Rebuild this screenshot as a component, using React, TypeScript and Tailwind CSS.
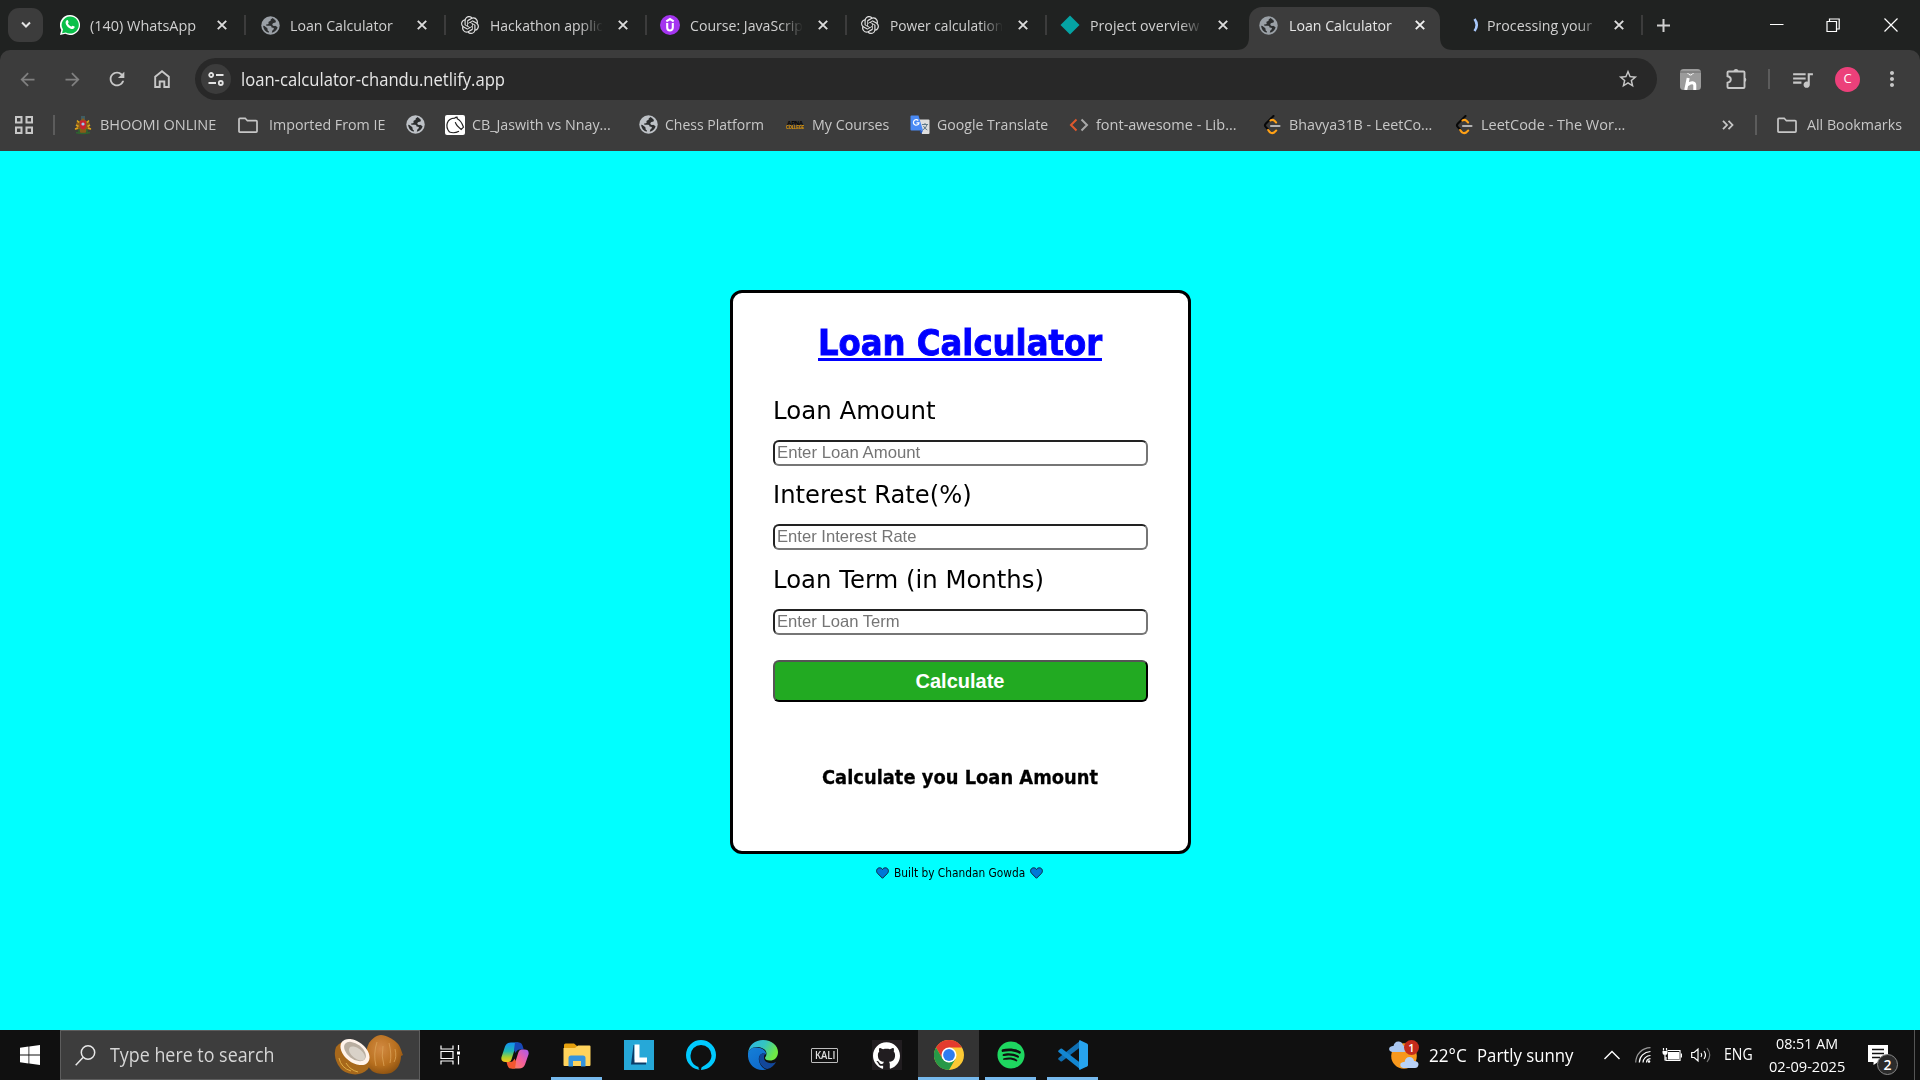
import { useLayoutEffect, useRef, useState } from "react";
import type { ReactNode } from "react";
import { FaSpotify } from "react-icons/fa";
import { MdArrowBack, MdArrowForward, MdRefresh, MdStarBorder, MdQueueMusic, MdMoreVert } from "react-icons/md";
import { SiOpenai, SiGithub } from "react-icons/si";

/* Text condensed or widened to fill the width given by its class. */
function Fit({ children, className }: { children: string; className: string }) {
  const outer = useRef<HTMLSpanElement>(null);
  const inner = useRef<HTMLSpanElement>(null);
  const [scale, setScale] = useState(1);
  useLayoutEffect(() => {
    const fit = () => {
      if (outer.current && inner.current) setScale(outer.current.clientWidth / inner.current.offsetWidth);
    };
    fit();
    document.fonts.ready.then(fit);
  }, []);
  return (
    <span ref={outer} className={`block shrink-0 whitespace-nowrap ${className}`}>
      <span ref={inner} className="inline-block origin-left" style={{ transform: `scaleX(${scale})` }}>
        {children}
      </span>
    </span>
  );
}

const Globe = ({ light }: { light?: boolean }) => (
  <svg viewBox="0 0 20 20" className={light ? "size-[19px] shrink-0 text-[#bdc1c6]" : "size-[19px] shrink-0 text-[#9aa0a6]"}>
    <circle cx="10" cy="10" r="9.700" fill="currentColor" />
    <path d="M12.300 2.200l-1.800 1.300q-.8.600-.3 1.600l-1.700.6q-1 .4-.6 1.500.5 1.100-.6 1.500l-1.900.2q-.3 1.200.8 1.300l3.600.1q1.300.2 1.300 1.700l1.700.3q1.300.4.6 1.700l-1.600 1.400-.4 2.200q4.800-1.300 6.100-5.600l-1.500-1.200q-.9-.8-1.900-.4-1.900.3-2.200-1.100-.1-1.500 1.200-1.900l2.200-.5q.9-1.600-.2-2.500z" fill="#2c2e2f" />
    <path d="M2.200 10.300q.4 5.600 5.900 7.300l.2-1.500q-1.500-.3-1.400-2l-.2-1.200-3-2.300z" fill="#2c2e2f" />
  </svg>
);

const Close = ({ className }: { className: string }) => (
  <svg viewBox="0 0 10 10" className={`size-[10px] shrink-0 ${className}`}>
    <path d="M0.8 0.8l8.4 8.4M9.2 0.8L0.8 9.2" stroke="currentColor" strokeWidth="1.9" />
  </svg>
);

const Udemy = () => (
  <svg viewBox="0 0 20 20" className="size-5">
    <circle cx="10" cy="10" r="10" fill="#a435f0" />
    <path d="M6.3 6.3L10 4l3.7 2.3M7.2 8v4.6c0 3.9 5.6 3.9 5.6 0V8" fill="none" stroke="#fff" strokeWidth="2.1" />
  </svg>
);

const Diamond = () => (
  <svg viewBox="0 0 20 20" className="size-5"><path d="M10 .5L19.5 10 10 19.5.5 10z" fill="#05a3a3" /></svg>
);

const Spinner = () => (
  <svg viewBox="0 0 20 20" className="size-5"><path d="M14.5 4q4.500 6 0 12" fill="none" stroke="#a8c7fa" strokeWidth="2.600" /></svg>
);

const WhatsApp = () => (
  <svg viewBox="0 0 20 20" className="size-5">
    <path d="M10 0a10 10 0 1 1-4.7 18.8L0 20l1.3-5A10 10 0 0 1 10 0z" fill="#fff" />
    <path d="M10 1.4a8.6 8.6 0 1 1-4.2 16L2 18.2l1-3.6A8.6 8.6 0 0 1 10 1.4z" fill="#0ac04a" />
    <path d="M6.7 5.3c.7-.5 1.1-.2 1.4.5l.5 1.2c.2.6-.8 1.2-.6 1.6.7 1.4 1.8 2.4 3.2 3 .5.2 1-1.2 1.6-.9l1.7.9c.6.4-.2 2.3-1.7 2.5-3.3.2-7.4-3.8-7.2-6.7 0-.8.4-1.5 1.1-2.1z" fill="#fff" />
  </svg>
);

function Tab({ icon, title, w, fade, last }: { icon: ReactNode; title: string; w: string; fade?: boolean; last?: boolean }) {
  return (
    <div className={`flex h-full items-center ${last ? "w-[190px]" : "w-[200px]"}`}>
      <div className="ml-[14px] flex size-5 shrink-0 items-center justify-center">{icon}</div>
      <div className={fade ? "ml-[10px] w-[113px] [mask-image:linear-gradient(to_right,black_80%,transparent)]" : "ml-[10px] w-[113px]"}>
        <Fit className={w}>{title}</Fit>
      </div>
      <Close className="ml-[15px] text-[#dcdcdc]" />
      {!last && <div className="ml-[17px] h-5 w-[2px] shrink-0 bg-[#3c3c3c]" />}
    </div>
  );
}

const Folder = () => (
  <svg viewBox="0 0 20 20" className="size-5" fill="none" stroke="#c7c7c7" strokeWidth="1.7">
    <path d="M1 16.2V4.2q0-.9.9-.9h5.3l2.2 2.4h8.7q.9 0 .9.9v9.600q0 .9-.9.9H1.900q-.9 0-.9-.9z" />
  </svg>
);

const Crest = () => (
  <svg viewBox="0 0 20 20" className="size-5">
    <path d="M8 1h4v4H8z" fill="#3f5d63" />
    <path d="M10 3l3 3h2.500l1.500 3-1.500 2 3 4-4-.500-2 3.500H7.500l-2-3.500-4 .500 3-4L3 9l1.500-3H7z" fill="#8a5a18" />
    <path d="M4 5.500l2 2M16 5.500l-2 2M3 10l2.500 1.500M17 10l-2.500 1.500M2 14l3-1M18 14l-3-1" stroke="#d9a51f" strokeWidth="1.600" />
    <path d="M7 5.500h6v5q0 3-3 4-3-1-3-4z" fill="#c8222f" />
    <circle cx="10" cy="9" r="1.6" fill="#9dc5ef" />
    <path d="M3 17.500q7 2 14 0M6 14v4M14 14v4" stroke="#2f6430" strokeWidth="1.6" fill="none" />
  </svg>
);

const Knight = () => (
  <svg viewBox="0 0 20 20" className="size-5">
    <rect width="20" height="20" rx="2" fill="#fff" />
    <path d="M4.500 17C-.5 11 2 3.500 9.500 3.200c1.200-1 2-1 2.500-1l.3 1.600c3.700 1.700 5 5 6.200 8.400l-2.300 2.200C13.600 12.500 11 10.500 10.300 7.200M4.500 17c3 1.200 6.500.8 9.500-.8" fill="none" stroke="#222" strokeWidth="1.2" />
  </svg>
);

const Courses = () => (
  <span className="flex w-5 flex-col items-center font-['Liberation_Sans'] text-[6px] font-black leading-[4px] tracking-tighter">
    <span className="text-black">APNA</span>
    <Fit className="w-[18px] text-[5px] text-[#e59a08]">COLLEGE</Fit>
  </span>
);

const Translate = () => (
  <svg viewBox="0 0 20 20" className="size-5">
    <path d="M8 4.5h10.500q1 0 1 1V18q0 1-1 1H12z" fill="#dedede" />
    <path d="M12 9.500h6M15 8v1.500M17 9.700q-1 4-4.500 5.300M13.500 11q1 2.500 3.800 4" stroke="#607988" fill="none" />
    <path d="M1.500.5h7L13 15.500H1.500q-1 0-1-1v-13q0-1 1-1z" fill="#4a8af4" />
    <path d="M9.500 15.500H13l-1.800 3.500z" fill="#2459c4" />
    <path d="M8.300 5.500a2.800 2.800 0 1 0 .7 2.300H6.500" fill="none" stroke="#fff" strokeWidth="1.2" />
  </svg>
);

const Code = () => (
  <svg viewBox="0 0 20 20" className="size-5" fill="none" strokeWidth="2">
    <path d="M7.500 4.500L2 10l5.500 5.500" stroke="#e0592d" />
    <path d="M12.500 4.500L18 10l-5.500 5.500" stroke="#a9a9a9" />
  </svg>
);

const Leet = () => (
  <svg viewBox="0 0 20 20" className="size-5" fill="none" strokeWidth="2.1" strokeLinecap="round">
    <path d="M11.500 1L3.700 8.700q-1.500 1.500 0 3.200l2.500 2.700" stroke="#080808" />
    <path d="M8.500 5.500q2-1.500 4 .3l1.600 1.600M6.200 15q2.500 4.500 6 2.500l2-2" stroke="#ffa116" />
    <path d="M9 11h8.500" stroke="#b3b3b3" />
  </svg>
);

const bookmarks: { icon: ReactNode; label?: string; w?: string; ml: string; gap?: string }[] = [
  { icon: <Crest />, label: "BHOOMI ONLINE", w: "w-[116px]", ml: "ml-[18px]" },
  { icon: <Folder />, label: "Imported From IE", w: "w-[116px]", ml: "ml-[22px]", gap: "ml-[11px]" },
  { icon: <Globe light />, ml: "ml-[20px]" },
  { icon: <Knight />, label: "CB_Jaswith vs Nnay...", w: "w-[139px]", ml: "ml-[20px]" },
  { icon: <Globe light />, label: "Chess Platform", w: "w-[99px]", ml: "ml-[27px]" },
  { icon: <Courses />, label: "My Courses", w: "w-[77px]", ml: "ml-[21px]" },
  { icon: <Translate />, label: "Google Translate", w: "w-[111px]", ml: "ml-[21px]" },
  { icon: <Code />, label: "font-awesome - Lib...", w: "w-[141px]", ml: "ml-[21px]" },
  { icon: <Leet />, label: "Bhavya31B - LeetCo...", w: "w-[143px]", ml: "ml-[25px]" },
  { icon: <Leet />, label: "LeetCode - The Wor...", w: "w-[144px]", ml: "ml-[22px]" },
];

function TabStrip() {
  return (
    <header className="flex h-[50px] items-center bg-[#202221] text-[15px] text-[#d0d0d0]">
      <button className="ml-2 flex h-[34px] w-[35px] items-center justify-center rounded-[11px] bg-[#3c3c3c]">
        <svg viewBox="0 0 10 8" className="h-2 w-[10px]"><path d="M1 1.500l4 4 4-4" fill="none" stroke="#e3e3e3" strokeWidth="2" /></svg>
      </button>
      <div className="ml-[3px] flex h-full items-center">
        <Tab icon={<WhatsApp />} title="(140) WhatsApp" w="w-[106px]" />
        <Tab icon={<Globe />} title="Loan Calculator" w="w-[103px]" />
        <Tab icon={<SiOpenai className="size-[18px] text-[#e0e0e0]" />} title="Hackathon applic" w="w-[113px]" fade />
        <Tab icon={<Udemy />} title="Course: JavaScrip" w="w-[113px]" fade />
        <Tab icon={<SiOpenai className="size-[18px] text-[#e0e0e0]" />} title="Power calculation" w="w-[113px]" fade />
        <Tab icon={<Diamond />} title="Project overview" w="w-[109px]" fade last />
      </div>
      <div className="flex h-full items-end text-[#3c3c3c]">
        <svg viewBox="0 0 13 13" className="size-[13px]"><path d="M13 0v13H0Q13 13 13 0z" fill="currentColor" /></svg>
        <div className="flex h-[43px] w-[191px] items-center rounded-t-[13px] bg-[#3c3c3c] pb-[7px] text-[#e6e6e6]">
          <div className="ml-[10px] flex size-5 items-center"><Globe /></div>
          <Fit className="ml-[10px] w-[103px]">Loan Calculator</Fit>
          <Close className="ml-[23px] text-[#f0f0f0]" />
        </div>
        <svg viewBox="0 0 13 13" className="size-[13px]"><path d="M0 0v13h13Q0 13 0 0z" fill="currentColor" /></svg>
      </div>
      <div className="ml-[7px] size-5"><Spinner /></div>
      <div className="ml-[7px] w-[113px] [mask-image:linear-gradient(to_right,black_80%,transparent)]">
        <Fit className="w-[105px]">Processing your</Fit>
      </div>
      <Close className="ml-[14px] text-[#dcdcdc]" />
      <div className="ml-[17px] h-5 w-[2px] bg-[#3c3c3c]" />
      <svg viewBox="0 0 13 13" className="ml-[14px] size-[13px]"><path d="M6.500 0v13M0 6.500h13" stroke="#d0d0d0" strokeWidth="2" /></svg>
      <svg viewBox="0 0 14 14" className="ml-auto size-[14px]"><path d="M0 6.500h13.500" stroke="#fff" /></svg>
      <svg viewBox="0 0 14 14" className="ml-[42px] size-[14px]" fill="none" stroke="#fff" strokeWidth="1.200"><path d="M1 3.500h9.500v10H1zM3.500 3V1h9.700v10h-2.500" /></svg>
      <svg viewBox="0 0 14 14" className="ml-[44px] mr-[22px] size-[14px]"><path d="M.5.5l13 13M13.500.5l-13 13" stroke="#fff" strokeWidth="1.200" /></svg>
    </header>
  );
}

function Toolbar() {
  return (
    <div className="bg-[#202221]">
      <div className="flex h-[58px] items-center rounded-t-[10px] bg-[#3c3c3c] text-[#c7c7c7]">
        <MdArrowBack className="ml-[17px] size-[21px] text-[#808080]" />
        <MdArrowForward className="ml-[24px] size-[21px] text-[#808080]" />
        <MdRefresh className="ml-[23px] size-[22px]" />
        <svg viewBox="0 0 16 18" className="ml-[26px] h-[18px] w-4" fill="none" stroke="currentColor" strokeWidth="1.900">
          <path d="M1.200 17V6.800L8 1.300l6.800 5.500V17h-4.500v-5.500H5.700V17z" />
        </svg>
        <div className="ml-[25px] flex h-[42px] w-[1462px] items-center rounded-full bg-[#282828]">
          <div className="ml-[6px] flex size-[30px] items-center justify-center rounded-full bg-[#3c3c3c]">
            <svg viewBox="0 0 16 14" className="h-[14px] w-4" fill="none" stroke="#e3e3e3" strokeWidth="1.800">
              <circle cx="3.200" cy="3" r="2" /><path d="M8 3h7.500M.5 11H8" /><circle cx="12.800" cy="11" r="2" />
            </svg>
          </div>
          <Fit className="ml-[10px] w-[264px] text-[17.5px] text-[#e6e6e6]">loan-calculator-chandu.netlify.app</Fit>
          <MdStarBorder className="ml-auto mr-[18px] size-[22px]" />
        </div>
        <svg viewBox="0 0 21 21" className="ml-[23px] size-[21px] shrink-0">
          <rect width="21" height="21" rx="3.500" fill="#9b9b9b" />
          <path d="M0 3h21" stroke="#6b6b6b" />
          <path d="M7.500 4q3 4 6 0" fill="none" stroke="#fff" />
          <path d="M8.200 9L5.700 21M7.500 16q2-2.500 5-2.300 2.500.5 2.300 3V21" fill="none" stroke="#fff" strokeWidth="3" />
        </svg>
        <svg viewBox="0 0 24 24" className="ml-[24px] size-6 shrink-0" fill="none" stroke="currentColor" strokeWidth="1.900">
          <path d="M3.500 4.500h15q1 0 1 1v14.500q0 1-1 1h-15q-1 0-1-1v-4.300q3.300-.6 3.300-3.200T2.500 9.300V5.500q0-1 1-1z" />
          <path d="M8.500 4.500a2.500 2.500 0 0 1 5 0zM19.500 10.500a2.300 2.300 0 0 1 0 4.500z" fill="currentColor" stroke="none" />
        </svg>
        <div className="ml-[19px] h-5 w-[2px] bg-[#5c5c5c]" />
        <MdQueueMusic className="ml-[20px] size-[25px]" />
        <div className="ml-[20px] flex size-[25px] items-center justify-center rounded-full bg-[#ec407a] text-[13px] text-white">C</div>
        <MdMoreVert className="ml-[20px] size-6" />
      </div>
      <div className="flex h-[43px] items-center bg-[#3c3c3c] pb-[10px] text-[15px] text-[#c7c7c7]">
        <svg viewBox="0 0 18 18" className="ml-[15px] size-[18px]" fill="none" stroke="currentColor" strokeWidth="2">
          <path d="M1 1h5.500v5.500H1zM11.500 1H17v5.500h-5.500zM1 11.500h5.500V17H1zM11.500 11.500H17V17h-5.500z" />
        </svg>
        <div className="ml-[20px] h-5 w-[2px] bg-[#5c5c5c]" />
        {bookmarks.map((b, i) => (
          <div key={i} className={`flex items-center ${b.ml}`}>
            <div className="flex size-5 shrink-0 items-center justify-center">{b.icon}</div>
            {b.label && b.w && <Fit className={`${b.gap ?? "ml-[7px]"} ${b.w}`}>{b.label}</Fit>}
          </div>
        ))}
        <svg viewBox="0 0 12 10" className="ml-auto h-[10px] w-3"><path d="M1 .8L5 5 1 9.200M6.500.8l4 4.200-4 4.200" fill="none" stroke="currentColor" strokeWidth="1.800" /></svg>
        <div className="ml-[21px] h-5 w-[2px] bg-[#5c5c5c]" />
        <div className="ml-[20px]"><Folder /></div>
        <Fit className="ml-[10px] mr-[18px] w-[95px]">All Bookmarks</Fit>
      </div>
    </div>
  );
}

function Field({ label, w, hint, hintW, mt }: { label: string; w: string; hint: string; hintW: string; mt: string }) {
  return (
    <label className={`flex flex-col ${mt}`}>
      <Fit className={`h-8 text-[24px] leading-8 ${w}`}>{label}</Fit>
      <span className="mt-[13px] flex h-[26px] items-center rounded-[6px] border-2 border-b-[#767676] border-l-[#222] border-r-[#767676] border-t-[#222] bg-white pb-[2px] pl-[2px] font-['Liberation_Sans'] text-[16.5px] leading-none text-[#757575]">
        <Fit className={hintW}>{hint}</Fit>
      </span>
    </label>
  );
}

const Heart = () => (
  <svg viewBox="0 0 13 12" className="h-3 w-[13px]">
    <path d="M6.500 11.300L1.500 6.300C-.5 4 1 .8 3.600.8c1.300 0 2.300.6 2.900 1.700C7.100 1.400 8.100.8 9.400.8c2.600 0 4.100 3.200 2.100 5.500z" fill="#0078d7" stroke="#10243c" />
  </svg>
);

function Calculator() {
  return (
    <main className="flex flex-1 flex-col items-center bg-[#00ffff] text-black">
      <section className="mt-[139px] flex h-[564px] w-[461px] flex-col rounded-[12px] border-[3px] border-black bg-white px-10 font-['DejaVu_Sans']">
        <h1 className="mt-[28px] flex justify-center text-[#0000ff]">
          <span className="flex h-[40px] items-start border-b-[3px] border-[#0000ff]">
            <Fit className="w-[284px] text-[35.5px] font-bold leading-[44px] [-webkit-text-stroke:0.9px_#0000ff]">Loan Calculator</Fit>
          </span>
        </h1>
        <Field label="Loan Amount" w="w-[163px]" hint="Enter Loan Amount" hintW="w-[143px]" mt="mt-[34px]" />
        <Field label="Interest Rate(%)" w="w-[199px]" hint="Enter Interest Rate" hintW="w-[140px]" mt="mt-[13px]" />
        <Field label="Loan Term (in Months)" w="w-[271px]" hint="Enter Loan Term" hintW="w-[123px]" mt="mt-[14px]" />
        <button className="mt-[25px] flex h-[42px] items-center justify-center rounded-[6px] border-2 border-b-black border-l-[#555] border-r-black border-t-[#555] bg-[#22aa22] font-['Liberation_Sans'] text-[20px] font-bold text-white">
          <Fit className="w-[89px]">Calculate</Fit>
        </button>
        <div className="mt-[62px] flex justify-center">
          <Fit className="w-[276px] text-[19.5px] font-bold leading-7 [-webkit-text-stroke:0.3px_#000]">Calculate you Loan Amount</Fit>
        </div>
      </section>
      <footer className="mt-[11px] flex items-center gap-[5px] pr-[2px] font-['DejaVu_Sans'] text-[11.5px] leading-4">
        <Heart /><Fit className="w-[131px]">Built by Chandan Gowda</Fit><Heart />
      </footer>
    </main>
  );
}

const Coconuts = () => (
  <svg viewBox="0 0 70 42" className="h-[42px] w-[70px]">
    <defs>
      <radialGradient id="nut" cx="40%" cy="35%" r="70%"><stop stopColor="#d28a42" /><stop offset=".6" stopColor="#b8701f" /><stop offset="1" stopColor="#8a5010" /></radialGradient>
    </defs>
    <path d="M47 1c5 0 12 4 15 7 4 3 5 8 7 13l-2 1c0 8-4 14-10 17-7 2-15 1-19-2-9-8-7-20-3-28 3-4 7-8 12-8z" fill="url(#nut)" />
    <path d="M43 8q-4 12-1 24M49 12q-2 10 1 20M55 9q3 12 1 20M61 15q2 8-1 13" fill="none" stroke="#dba256" strokeWidth=".8" />
    <path d="M2 13c5-7 14-8 23-3 9 7 13 18 9 25-6 7-18 7-26 1C2 30-1 21 2 13z" fill="#a7681b" />
    <path d="M5 24q2 10 12 13M12 29q4 7 12 9" stroke="#dfad45" fill="none" />
    <ellipse cx="21" cy="18" rx="16.500" ry="10.500" transform="rotate(38 21 18)" fill="#fff3ea" />
    <ellipse cx="21" cy="17.500" rx="12.500" ry="7.500" transform="rotate(38 21 17.500)" fill="#b9aea0" />
    <ellipse cx="23" cy="19.500" rx="9.500" ry="5" transform="rotate(38 23 19.500)" fill="#d9d2c8" />
  </svg>
);

const Copilot = () => (
  <svg viewBox="0 0 28 27" className="h-[27px] w-7">
    <defs>
      <linearGradient id="cpA" x1="0" y1="0" x2="0" y2="1"><stop stopColor="#1390f5" /><stop offset=".45" stopColor="#20b8b0" /><stop offset=".75" stopColor="#a6cf2f" /><stop offset="1" stopColor="#fbc51a" /></linearGradient>
      <linearGradient id="cpB" x1="1" y1="0" x2="0" y2="1"><stop stopColor="#a75bf0" /><stop offset=".5" stopColor="#f45f9c" /><stop offset="1" stopColor="#ff8a50" /></linearGradient>
    </defs>
    <path d="M10 .5h8q-2.500.5-3.500 4l-4 13q-.8 2.500-3 2.500H4.500Q-.5 20 .5 15L4 4.500Q5.500.5 10 .5z" fill="url(#cpA)" />
    <path d="M14 .5h4q2.500 0 3.500 3l1.300 4h-4q-3 0-4.300 3.500l-1.500-3z" fill="#1748b8" />
    <path d="M18 26.500h-8q2.500-.5 3.500-4l4-12.500q.8-2.500 3-2.500h3q5 0 4 5l-3.500 10q-1.500 4-6 4z" fill="url(#cpB)" />
    <path d="M14 26.500h-4q-2.500 0-3.500-3l-1-3.500h4q2.500 0 4-3.500l1.500 3z" fill="#f4572f" />
  </svg>
);

const Explorer = () => (
  <svg viewBox="0 0 28 24" className="h-6 w-7">
    <path d="M1 2q0-1.500 1.500-1.500H11L14 3v3H1z" fill="#e5a00d" />
    <path d="M.5 5H12l3-2.500h11.500q1 0 1 1V22q0 1-1 1H1.500q-1 0-1-1z" fill="#ffd35c" />
    <path d="M5.500 23.500V15q0-2.500 2.500-2.500h12q2.500 0 2.500 2.500v8.500H18V18h-8v5.500z" fill="#3494de" />
  </svg>
);

const Letter = () => (
  <svg viewBox="0 0 30 30" className="size-[30px]">
    <path d="M0 0h30v30H0z" fill="#26a8d8" />
    <path d="M10.500 5v14.500L7 24.500 9.500 5zM7 24.500l3.500-5L22 22v2.500z" fill="#0b3c68" />
    <path d="M10.500 4.500h5v13H23v5H10.500z" fill="#fff" />
  </svg>
);

const Alexa = () => (
  <svg viewBox="0 0 30 30" className="size-[30px]">
    <path fillRule="evenodd" d="M15 0a15 15 0 0 1 0 30c-2 0-2.500-.8-2.500-3C7.500 25.500 4.500 21 4.500 15.500a10.500 10.500 0 1 1 21 0c0 6-5.500 9-10 12l-.5 2.500A15 15 0 1 1 15 0z" fill="#00caff" />
  </svg>
);

const Edge = () => (
  <svg viewBox="0 0 30 30" className="size-[30px]">
    <defs>
      <linearGradient id="edA" x1="0" y1="0" x2="1" y2=".4"><stop stopColor="#2bb5e8" /><stop offset=".55" stopColor="#35c5c0" /><stop offset="1" stopColor="#6fe844" /></linearGradient>
      <linearGradient id="edB" x1="0" y1="0" x2=".6" y2="1"><stop stopColor="#1580d8" /><stop offset="1" stopColor="#0f6acb" /></linearGradient>
    </defs>
    <path d="M0 13C1 5 7 0 15 0c9 0 15 6 15 12 0 6-4 8.500-8 8.500-3.500 0-5-1.500-5-2.500s1.500-1.800 1.500-4.500C18.500 9 13 7 9 7c-5 0-8 3-9 6z" fill="url(#edA)" />
    <path d="M0 13c1-4 5-6 9-5.500 5 .2 9.500 3 9 7-4-3-8 1-7 6 1 6 6 9.300 8 9C8 32-1 25 0 13z" fill="url(#edB)" />
    <path d="M11.500 16c-2 6 3 12.500 8 13 4-1 7-4 8.500-7-5 2.500-12 1-12-4.500 0-2 .6-2.500 1.500-4-2.500-.8-5 .5-6 2.500z" fill="#12479a" />
  </svg>
);

const Chrome = () => (
  <svg viewBox="0 0 30 30" className="size-[30px]">
    <circle cx="15" cy="15" r="15" fill="#fcc934" />
    <path d="M2 7.500a15 15 0 0 1 26 0H15L8.500 18.700z" fill="#e33b2e" />
    <path d="M2 7.500A15 15 0 0 0 15 30l6.500-11.200L15 22.500 8.500 18.700z" fill="#279847" />
    <circle cx="15" cy="15" r="7.500" fill="#fff" /><circle cx="15" cy="15" r="5.900" fill="#2e7cf0" />
  </svg>
);

const VsCode = () => (
  <svg viewBox="0 0 30 30" className="size-[30px]">
    <path d="M.5 19.500l2 1.800q.8.500 1.600 0L22.500 7V.5L.5 18q-.6.800 0 1.500z" fill="#0f6fb3" />
    <path d="M.5 10.500l2-1.800q.8-.5 1.600 0L22.500 23v6.500L.5 12q-.6-.8 0-1.500z" fill="#1386d1" />
    <path d="M22 .3l7 3.200q1 .5 1 1.500v20q0 1-1 1.500l-7 3.300q-.8.300-1-.8V1q.2-1 1-.7z" fill="#27a3ee" />
  </svg>
);

const Weather = () => (
  <svg viewBox="0 0 30 28" className="h-7 w-[30px]">
    <circle cx="15" cy="15" r="12.800" fill="#f7981d" />
    <path d="M3 11q-4-1-2.500-4.500Q2 4.500 4.500 5q1-5 5.500-4.500Q13.500 1 14 4.500q4 0 4 3.500-.5 3-3 3z" fill="#a9c6f0" />
    <path d="M14 27q-3.500-1-2.500-4.500 1.500-2 4-1.500 1-5 5-5 4 .3 4.500 4 4.500 0 4.500 3.500-.5 3.500-3.500 3.500z" fill="#b9d2f7" />
  </svg>
);

function TaskButton({ children, active, open }: { children: ReactNode; active?: boolean; open?: boolean }) {
  return (
    <div className={`flex h-[50px] w-[61px] flex-col items-center ${active ? "bg-[#333333]" : ""}`}>
      <div className="flex h-[47px] items-center pt-[3px]">{children}</div>
      <div className={`h-[3px] ${active ? "w-[61px]" : "w-[51px]"} ${active || open ? "bg-[#76b9ed]" : ""}`} />
    </div>
  );
}

function Taskbar() {
  return (
    <footer className="flex h-[50px] items-center bg-[#101010] text-white">
      <svg viewBox="0 0 20 20" className="ml-5 size-5" fill="#fff"><path d="M0 2.800l8.500-1.200v8H0zM9.300 1.500L20 0v9.600H9.300zM0 10.400h8.500v8L0 17.200zM9.300 10.400H20V20L9.300 18.500z" /></svg>
      <div className="ml-5 flex h-[50px] w-[360px] items-center border border-[#5d5d5d] bg-[#3d3d3d]">
        <svg viewBox="0 0 21 21" className="ml-[14px] size-[21px]" fill="none" stroke="#e8e8e8" strokeWidth="1.500"><circle cx="13" cy="7.500" r="6.700" /><path d="M8 12.500L.7 20.200" /></svg>
        <Fit className="ml-[14px] w-[164px] text-[19.5px] text-[#d6d6d6]">Type here to search</Fit>
        <div className="ml-auto mr-[15px]"><Coconuts /></div>
      </div>
      <svg viewBox="0 0 21 20" className="ml-[20px] h-5 w-[21px]" fill="none" stroke="#fff" strokeWidth="1.200">
        <path d="M1 .5V4h12V.5M1 19.500V16h12v3.500M1 6.500h12v7H1zM18.500 0v5M18.500 11v8.500" /><path d="M17 6.500h3v3h-3z" fill="#fff" stroke="none" />
      </svg>
      <div className="ml-[23px] flex gap-[1px]">
        <TaskButton><Copilot /></TaskButton>
        <TaskButton open><Explorer /></TaskButton>
        <TaskButton><Letter /></TaskButton>
        <TaskButton><Alexa /></TaskButton>
        <TaskButton><Edge /></TaskButton>
        <TaskButton>
          <div className="flex h-[15px] w-[27px] items-center justify-center rounded-[1px] border border-[#bdbdbd] text-[10px] font-semibold leading-none text-[#e0e0e0]"><Fit className="w-[20px]">KALI</Fit></div>
        </TaskButton>
        <TaskButton><div className="flex size-[30px] items-center justify-center bg-[#211d20]"><SiGithub className="size-[27px]" /></div></TaskButton>
        <TaskButton active><Chrome /></TaskButton>
        <TaskButton open><FaSpotify className="size-[28px] text-[#1ed760]" /></TaskButton>
        <TaskButton open><VsCode /></TaskButton>
      </div>
      <div className="relative ml-auto">
        <Weather />
        <span className="absolute -top-px left-[15px] flex size-[15px] items-center justify-center rounded-full bg-[#c42b1c] text-[11px] font-semibold leading-none">1</span>
      </div>
      <Fit className="ml-[10px] w-[38px] text-[18.5px]">22°C</Fit>
      <Fit className="ml-[10px] w-[96px] text-[18.5px]">Partly sunny</Fit>
      <svg viewBox="0 0 16 10" className="ml-[31px] h-[10px] w-4"><path d="M.5 9L8 1.500 15.500 9" fill="none" stroke="#fff" strokeWidth="1.400" /></svg>
      <svg viewBox="0 0 16 16" className="ml-[15px] size-4" fill="none" stroke="#fff" strokeWidth="1.200">
        <path d="M.7 15.500C1 7 7 1 15.500.7" stroke="#999" /><path d="M4.300 15.500C4.500 9.500 9 5 15.500 4.500M8 15.500c0-3.800 3.500-7 7.500-7M11.500 15.500c0-2 1.500-3.500 4-3.800" /><circle cx="14" cy="14.500" r="1.300" fill="#fff" stroke="none" />
      </svg>
      <svg viewBox="0 0 20 14" className="ml-[11px] h-[14px] w-5" fill="none" stroke="#fff" strokeWidth="1.200"><path d="M5.500 2.500H18v10H4V9" /><path d="M6.500 4.500h10v6.500H6.500z" fill="#fff" /><path d="M19.400 5.500v4M1.500 0v2.500M4.500 0v2.500M3 7v5.500" /><path d="M.5 3h5v2q0 2-2.500 2T.5 5z" fill="#fff" stroke="none" /></svg>
      <svg viewBox="0 0 20 18" className="ml-[9px] h-[18px] w-5" fill="none" stroke="#fff" strokeWidth="1.200"><path d="M.7 6.500h2.500L7 3v12l-3.800-3.500H.7zM10 7q1.500 2 0 4M13 5q3 4 0 8" /><path d="M16 2q5.500 7 0 14" stroke="#777" /></svg>
      <Fit className="ml-[13px] w-[29px] text-[15.5px]">ENG</Fit>
      <div className="ml-[16px] flex w-[76px] flex-col items-center text-[15px] leading-[23px]">
        <Fit className="w-[62px]">08:51 AM</Fit>
        <Fit className="w-[76px]">02-09-2025</Fit>
      </div>
      <div className="relative ml-[23px] h-5 w-5">
        <svg viewBox="0 0 20 20" className="size-5"><path d="M0 0h20v17H10l-4.500 3V17H0z" fill="#fff" /><path d="M4 4.500h12M4 8.500h12M4 12.500h8" stroke="#101010" strokeWidth="1.300" /></svg>
        <span className="absolute left-[9px] top-[9px] flex size-[21px] items-center justify-center rounded-full border border-[#888] bg-[#2b2b2b] text-[14px] font-semibold leading-none">2</span>
      </div>
      <div className="ml-[26px] mr-[5px] h-full w-px bg-[#555]" />
    </footer>
  );
}

export default function App() {
  return (
    <div className="flex h-[1080px] w-[1920px] flex-col overflow-hidden font-['Open_Sans',sans-serif]">
      <TabStrip />
      <Toolbar />
      <Calculator />
      <Taskbar />
    </div>
  );
}
